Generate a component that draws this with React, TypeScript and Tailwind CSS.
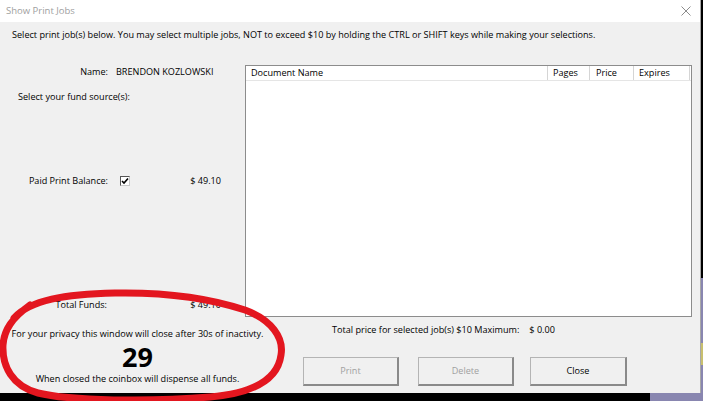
import React from "react";

const font = { fontFamily: '"Open Sans", "Noto Sans", sans-serif' };

function Checkbox() {
  return (
    <div className="w-[10px] h-[10px] border-t border-l border-[#555] border-r border-b border-r-[#c8c8c8] border-b-[#c8c8c8] bg-white flex items-center justify-center">
      <svg width="8" height="8" viewBox="0 0 8 8">
        <path d="M1 4 L3 6 L7 1.5" stroke="#000" strokeWidth="1.6" fill="none" />
      </svg>
    </div>
  );
}

function WinButton({ label, disabled, width }: { label: string; disabled?: boolean; width: string }) {
  return (
    <button
      className={`${width} h-[29px] bg-[#f0f0f0] border-t border-l border-[#b4b4b4] border-r-2 border-b-2 border-r-[#8a8a8a] border-b-[#8a8a8a] text-[9.1px] ${
        disabled ? "text-[#a0a0a0]" : "text-black"
      }`}
    >
      {label}
    </button>
  );
}

export default function App() {
  return (
    <div className="relative w-[703px] h-[401px] bg-black overflow-hidden text-[9.1px] text-black" style={font}>
      {/* desktop showing behind the window */}
      <div className="absolute right-0 bottom-0 w-[53px] h-[123px] bg-[#8986b0]" />
      <div className="absolute right-0 top-[343px] w-[3px] h-[22px] bg-[#c8bf6e]" />

      <div className="relative w-[701px] h-[393px] bg-[#f0f0f0] border-r border-[#a8a8a8] flex flex-col">
        {/* title bar */}
        <div className="h-[22px] bg-white flex items-center justify-between pl-[6px] pr-[9px] shrink-0">
          <span className="text-[#a0a0a0] text-[9.5px]">Show Print Jobs</span>
          <svg width="10" height="10" viewBox="0 0 10 10">
            <path d="M0.5 0.5 L9.5 9.5 M9.5 0.5 L0.5 9.5" stroke="#8c8c8c" strokeWidth="1" />
          </svg>
        </div>

        <div className="mt-[6px] h-[14px] leading-[14px] pl-[12px] whitespace-nowrap">
          Select print job(s) below. You may select multiple jobs, NOT to exceed $10 by holding the CTRL or SHIFT keys while making your selections.
        </div>

        {/* upper part */}
        <div className="mt-[23px] flex h-[252px]">
          <div className="w-[245px] flex flex-col">
            <div className="flex h-[14px] leading-[14px]">
              <span className="w-[108px] text-right">Name:</span>
              <span className="ml-[8px]">BRENDON KOZLOWSKI</span>
            </div>
            <div className="mt-[11px] h-[14px] leading-[14px] pl-[18px]">Select your fund source(s):</div>
            <div className="mt-[70px] flex items-center w-[221px] h-[14px] leading-[14px]">
              <span className="w-[108px] text-right">Paid Print Balance:</span>
              <div className="ml-[12px]">
                <Checkbox />
              </div>
              <span className="ml-auto">$ 49.10</span>
            </div>
            <div className="mt-[110px] flex w-[221px] h-[14px] leading-[14px]">
              <span className="w-[107px] text-right">Total Funds:</span>
              <span className="ml-auto">$ 49.10</span>
            </div>
          </div>

          {/* job list */}
          <div className="w-[447px] h-[252px] bg-white border border-[#8c8c8c] flex flex-col">
            <div className="flex h-[15px] leading-[14px] border-b border-[#e5e5e5]">
              <div className="w-[302px] pl-[5px] border-r border-[#d5d5d5]">Document Name</div>
              <div className="w-[42px] pl-[5px] border-r border-[#d5d5d5]">Pages</div>
              <div className="w-[44px] pl-[6px] border-r border-[#d5d5d5]">Price</div>
              <div className="w-[56px] pl-[5px] border-r border-[#d5d5d5]">Expires</div>
            </div>
          </div>
        </div>

        {/* lower part */}
        <div className="flex flex-1">
          <div className="w-[275px] flex flex-col items-center pt-[10px]">
            <div className="h-[14px] leading-[14px] whitespace-nowrap">
              For your privacy this window will close after 30s of inactivty.
            </div>
            <div className="mt-[2px] h-[27px] leading-[27px] text-[27px] font-bold">29</div>
            <div className="mt-[2px] h-[14px] leading-[14px] whitespace-nowrap">
              When closed the coinbox will dispense all funds.
            </div>
          </div>
          <div className="flex-1 flex flex-col pt-[6px]">
            <div className="flex h-[14px] leading-[14px] pl-[57px] whitespace-nowrap">
              <span>Total price for selected job(s) $10 Maximum:</span>
              <span className="ml-[10px]">$ 0.00</span>
            </div>
            <div className="mt-[20px] flex pl-[28px]">
              <WinButton label="Print" disabled width="w-[96px]" />
              <div className="ml-[19px]">
                <WinButton label="Delete" disabled width="w-[96px]" />
              </div>
              <div className="ml-[16px]">
                <WinButton label="Close" width="w-[97px]" />
              </div>
            </div>
          </div>
        </div>
      </div>

      {/* red marker circle drawn over the screenshot */}
      <svg className="absolute left-0 top-0 pointer-events-none" width="703" height="401" viewBox="0 0 703 401">
        <path
          d="M14 318 C30 300 65 294 115 293 C170 292 215 300 245 310 C272 320 284 338 281 355 C278 378 255 393 210 397 C150 402 70 401 38 393 C12 386 2 366 3 345 C4 330 12 318 30 305"
          stroke="#e3161f"
          strokeWidth="7"
          fill="none"
          strokeLinecap="round"
        />
      </svg>
    </div>
  );
}
